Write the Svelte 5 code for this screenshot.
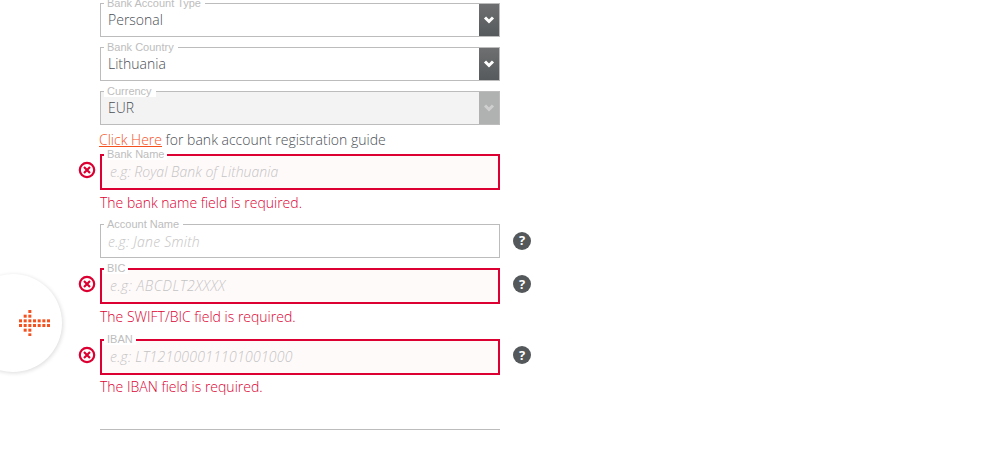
<script>
	// dot rows of the arrow logo, one string per row, x marks a dot
	const arrowRows = [
		'..x....',
		'.xx....',
		'xxxxxxx',
		'xxxxxxx',
		'.xx....',
		'..x....'
	];

	const selects = [
		{ label: 'Bank Account Type', value: 'Personal' },
		{ label: 'Bank Country', value: 'Lithuania' },
		{ label: 'Currency', value: 'EUR', disabled: true }
	];
</script>

{#snippet errorIcon()}
	<svg class="err-icon" viewBox="0 0 18 18" aria-hidden="true">
		<circle cx="9" cy="9" r="7.2" fill="none" stroke="#dc0032" stroke-width="2.2" />
		<path d="M6 6l6 6M12 6l-6 6" fill="none" stroke="#dc0032" stroke-width="2.2" />
	</svg>
{/snippet}

{#snippet helpIcon()}
	<span class="help">?</span>
{/snippet}

<div class="page">
	<aside class="nav-tab">
		<svg width="31" height="26" viewBox="0 0 31 26" aria-hidden="true">
			{#each arrowRows as row, y}
				{#each row.split('') as c, x}
					{#if c === 'x'}
						<rect x={x * 4.67} y={y * 4.67} width="3" height="3" fill="#f4511e" />
					{/if}
				{/each}
			{/each}
		</svg>
	</aside>

	<form class="form">
		{#each selects as s}
			<div class="row">
				<span></span>
				<div class="field" class:disabled={s.disabled}>
					<span class="legend">{s.label}</span>
					<span class="value">{s.value}</span>
					<span class="arrow">
						<svg width="14" height="10" viewBox="0 0 14 10" aria-hidden="true">
							<path d="M3 2.5L7 6.5l4-4" fill="none" stroke="currentColor" stroke-width="3" />
						</svg>
					</span>
				</div>
			</div>
		{/each}

		<p class="guide"><a href="#guide">Click Here</a> for bank account registration guide</p>

		<div class="row tight">
			{@render errorIcon()}
			<div class="field invalid">
				<span class="legend">Bank Name</span>
				<span class="placeholder">e.g: Royal Bank of Lithuania</span>
			</div>
		</div>
		<p class="error">The bank name field is required.</p>

		<div class="row">
			<span></span>
			<div class="field">
				<span class="legend">Account Name</span>
				<span class="placeholder name">e.g: Jane Smith</span>
			</div>
			{@render helpIcon()}
		</div>

		<div class="row tight">
			{@render errorIcon()}
			<div class="field invalid">
				<span class="legend">BIC</span>
				<span class="placeholder bic">e.g: ABCDLT2XXXX</span>
			</div>
			{@render helpIcon()}
		</div>
		<p class="error before-iban">The SWIFT/BIC field is required.</p>

		<div class="row tight">
			{@render errorIcon()}
			<div class="field invalid">
				<span class="legend">IBAN</span>
				<span class="placeholder code">e.g: LT121000011101001000</span>
			</div>
			{@render helpIcon()}
		</div>
		<p class="error last">The IBAN field is required.</p>

		<div class="row">
			<span></span>
			<hr />
		</div>
	</form>
</div>

<style>
	:global(body) {
		margin: 0;
		background: #fff;
	}
	.page {
		position: relative;
		height: 458px;
		overflow: hidden;
		font-family: 'Open Sans', 'Liberation Sans', sans-serif;
	}
	.nav-tab {
		position: absolute;
		left: -36px;
		top: 274px;
		width: 98px;
		height: 98px;
		border-radius: 50%;
		background: #fff;
		box-shadow: 1px 1px 4px rgba(0, 0, 0, 0.14);
		display: flex;
		align-items: center;
		justify-content: flex-end;
		padding-right: 12px;
		box-sizing: border-box;
	}
	.form {
		margin-left: 78px;
		padding-top: 3px;
	}
	.row {
		display: grid;
		grid-template-columns: 22px 400px 32px;
		align-items: center;
		margin-bottom: 10px;
	}
	.row.tight {
		margin-bottom: 0;
	}
	.row > .help {
		margin-left: 13px;
		margin-bottom: 1px;
	}
	.row.tight > .help {
		margin-bottom: 4px;
	}
	.field {
		position: relative;
		box-sizing: border-box;
		height: 34px;
		border: 1px solid #bcbcbc;
		display: flex;
		align-items: center;
		padding-left: 7px;
		font-size: 14px;
		font-weight: 300;
		color: #4a4f55;
	}
	.field.disabled {
		background: #f3f3f3;
	}
	.field.invalid {
		height: 36px;
		border: 2px solid #dc0032;
		background: #fffafa;
		padding-left: 8px;
		padding-bottom: 2px;
	}
	.value {
		margin-bottom: 2px;
	}
	.legend {
		position: absolute;
		left: 3px;
		top: -7px;
		padding: 0 4px 0 3px;
		background: #fff;
		font-family: 'Liberation Sans', Arial, sans-serif;
		font-size: 11px;
		line-height: 12px;
		font-weight: 400;
		color: #bdbdbd;
	}
	.field.invalid .legend {
		left: 2px;
		top: -8px;
		padding-right: 3px;
	}
	.placeholder {
		font-style: italic;
		color: #c4c4c4;
		letter-spacing: 0.05px;
	}
	.placeholder.name {
		letter-spacing: 0.25px;
	}
	.placeholder.bic {
		letter-spacing: 0.5px;
	}
	.placeholder.code {
		letter-spacing: 0.25px;
	}
	.arrow {
		position: absolute;
		right: 0;
		top: 0;
		bottom: 0;
		width: 20px;
		display: flex;
		align-items: center;
		justify-content: center;
		background: linear-gradient(#6e6f71, #565a5c);
		color: #fff;
	}
	.disabled .arrow {
		background: #b0b1b1;
		color: #cfcfcf;
	}
	.guide {
		margin: -5px 0 4px 21px;
		height: 20px;
		line-height: 20px;
		font-size: 14px;
		font-weight: 300;
		color: #4a4f55;
	}
	.guide a {
		color: #f4511e;
	}
	.error {
		margin: 4px 0 12px 22px;
		height: 18px;
		line-height: 18px;
		font-size: 14px;
		font-weight: 300;
		color: #dc0032;
	}
	.error.before-iban {
		margin-bottom: 13px;
	}
	.error.last {
		margin-top: 3px;
		margin-bottom: 33px;
	}
	.err-icon {
		width: 18px;
		height: 18px;
		display: block;
		margin-bottom: 4px;
	}
	.help {
		display: flex;
		align-items: center;
		justify-content: center;
		width: 18px;
		height: 18px;
		border-radius: 50%;
		background: #54585a;
		color: #fff;
		font-size: 13px;
		font-weight: 700;
		line-height: 1;
	}
	hr {
		width: 400px;
		margin: 0;
		border: 0;
		border-top: 1px solid #bcbcbc;
	}
</style>
